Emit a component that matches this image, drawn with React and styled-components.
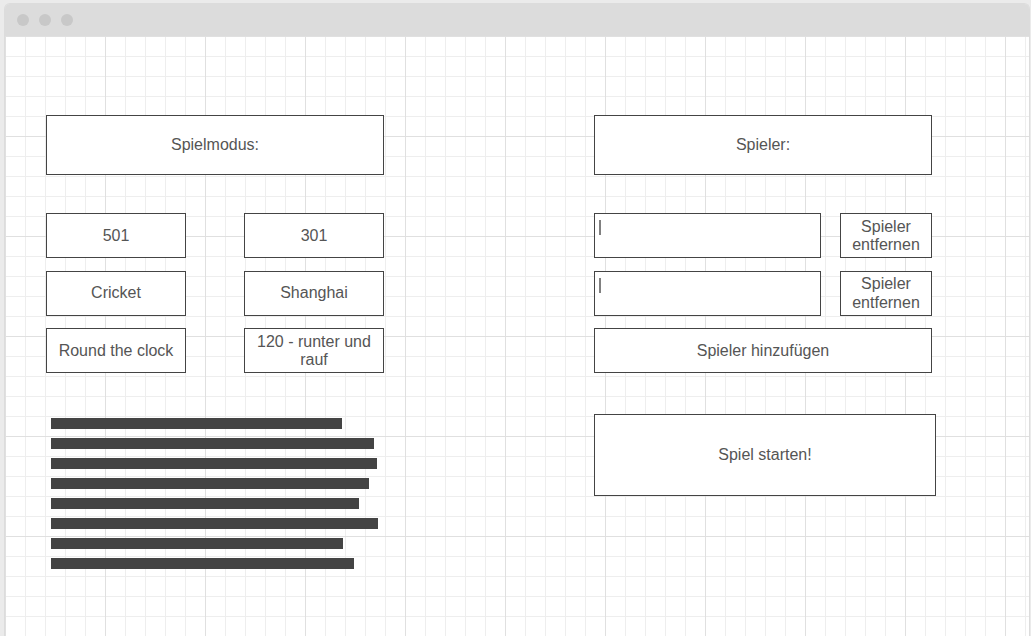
import styled, { createGlobalStyle } from "styled-components";

const GlobalStyle = createGlobalStyle`
  html, body {
    margin: 0;
    padding: 0;
    background-color: #ebebeb;
    overflow: hidden;
    font-family: "Liberation Sans", Arial, sans-serif;
  }
`;

const BrowserWindow = styled.div`
  margin: 3px 0 0 4px;
  width: 1026px;
  height: 640px;
  display: flex;
  flex-direction: column;
  border: 1px solid #dcdcdc;
  border-bottom: none;
  border-radius: 6px 6px 0 0;
  box-sizing: border-box;
  overflow: hidden;
`;

const TitleBar = styled.div`
  height: 32px;
  flex: none;
  display: flex;
  align-items: center;
  gap: 10px;
  padding-left: 12px;
  background-color: #dcdcdc;
`;

const Dot = styled.span`
  width: 12px;
  height: 12px;
  border-radius: 50%;
  background-color: #c8c8c8;
`;

const Canvas = styled.div`
  flex: 1;
  display: flex;
  gap: 210px;
  padding: 79px 0 0 41px;
  background-color: #fff;
  background-image:
    linear-gradient(to right, #e0e0e0 1px, transparent 1px),
    linear-gradient(to bottom, #e0e0e0 1px, transparent 1px),
    linear-gradient(to right, #eeeeee 1px, transparent 1px),
    linear-gradient(to bottom, #eeeeee 1px, transparent 1px);
  background-size: 100px 100px, 100px 100px, 20px 20px, 20px 20px;
`;

const Column = styled.div`
  display: flex;
  flex-direction: column;
  width: ${(p) => p.$width}px;
`;

const Box = styled.div`
  box-sizing: border-box;
  width: ${(p) => (p.$width ? `${p.$width}px` : "100%")};
  height: ${(p) => p.$height || 45}px;
  display: flex;
  align-items: center;
  justify-content: center;
  padding: 1px 4px 0;
  border: 1px solid #444;
  background-color: #fff;
  color: #555;
  font-size: 16px;
  line-height: 18.5px;
  text-align: center;
`;

const ModeGrid = styled.div`
  margin-top: 38px;
  display: grid;
  grid-template-columns: 140px 140px;
  grid-auto-rows: 45px;
  column-gap: 58px;
  row-gap: 12.5px;
`;

const TextBlock = styled.div`
  margin-top: 45px;
  padding-left: 5px;
  display: flex;
  flex-direction: column;
  gap: 9px;
`;

const TextBar = styled.div`
  height: 11px;
  background-color: #444;
`;

const PlayerList = styled.div`
  margin-top: 38px;
  display: flex;
  flex-direction: column;
  gap: 12.5px;
`;

const PlayerRow = styled.div`
  display: flex;
  gap: 19px;
`;

const NameInput = styled.div`
  box-sizing: border-box;
  width: 227px;
  height: 45px;
  border: 1px solid #444;
  background-color: #fff;
  padding: 6px 0 0 4px;

  &::before {
    content: "";
    display: block;
    width: 2px;
    height: 15px;
    background-color: #808080;
  }
`;

const StartButton = styled(Box)`
  margin-top: 41px;
`;

const modes = ["501", "301", "Cricket", "Shanghai", "Round the clock", "120 - runter und rauf"];
const barWidths = [291, 323, 326, 318, 308, 327, 292, 303];

export default function App() {
  return (
    <>
      <GlobalStyle />
      <BrowserWindow>
        <TitleBar>
          <Dot />
          <Dot />
          <Dot />
        </TitleBar>
        <Canvas>
          <Column $width={338}>
            <Box $height={60}>Spielmodus:</Box>
            <ModeGrid>
              {modes.map((m) => (
                <Box key={m} $height={45}>
                  {m}
                </Box>
              ))}
            </ModeGrid>
            <TextBlock>
              {barWidths.map((w, i) => (
                <TextBar key={i} style={{ width: w }} />
              ))}
            </TextBlock>
          </Column>
          <Column $width={342}>
            <Box $width={338} $height={60}>
              Spieler:
            </Box>
            <PlayerList>
              <PlayerRow>
                <NameInput />
                <Box $width={92}>Spieler entfernen</Box>
              </PlayerRow>
              <PlayerRow>
                <NameInput />
                <Box $width={92}>Spieler entfernen</Box>
              </PlayerRow>
              <Box $width={338}>Spieler hinzufügen</Box>
            </PlayerList>
            <StartButton $width={342} $height={82}>
              Spiel starten!
            </StartButton>
          </Column>
        </Canvas>
      </BrowserWindow>
    </>
  );
}
